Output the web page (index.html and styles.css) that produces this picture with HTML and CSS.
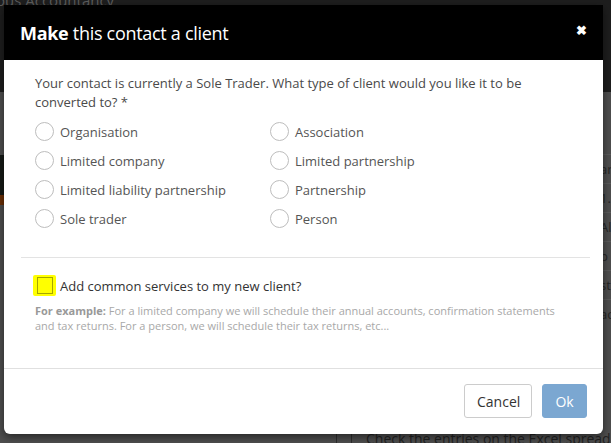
FILE: index.html
```html
<!DOCTYPE html>
<html>
<head>
<meta charset="utf-8">
<link rel="stylesheet" href="styles.css">
</head>
<body>
<div class="app">
  <div class="app-top"><span class="app-brand">ous Accountancy</span></div>
  <div class="app-side-dark"></div>
  <div class="app-side-orange"></div>
  <div class="app-right">
    <div class="rline">ar</div>
    <div class="rline">1.</div>
    <div class="rline">Al</div>
    <div class="rline">p</div>
    <div class="rline">st</div>
    <div class="rline">ac</div>
  </div>
  <div class="app-bottom"><span class="app-check"></span><span class="app-bottom-text">Check the entries on the Excel spreadsheet</span></div>
</div>

<div class="modal">
  <div class="modal-header">
    <h1 class="modal-title"><b>Make</b> this contact a client</h1>
    <span class="modal-close">&#x2716;</span>
  </div>
  <div class="modal-body">
    <p class="question">Your contact is currently a Sole Trader. What type of client would you like it to be converted to? *</p>
    <div class="radio-grid">
      <label class="radio"><span class="circle"></span>Organisation</label>
      <label class="radio"><span class="circle"></span>Association</label>
      <label class="radio"><span class="circle"></span>Limited company</label>
      <label class="radio"><span class="circle"></span>Limited partnership</label>
      <label class="radio"><span class="circle"></span>Limited liability partnership</label>
      <label class="radio"><span class="circle"></span>Partnership</label>
      <label class="radio"><span class="circle"></span>Sole trader</label>
      <label class="radio"><span class="circle"></span>Person</label>
    </div>
    <hr class="divider">
    <label class="check"><span class="check-hl"><span class="box"></span></span>Add common services to my new client?</label>
    <p class="help"><b>For example:</b> For a limited company we will schedule their annual accounts, confirmation statements and tax returns. For a person, we will schedule their tax returns, etc...</p>
  </div>
  <div class="modal-footer">
    <button class="btn btn-default">Cancel</button>
    <button class="btn btn-primary">Ok</button>
  </div>
</div>
</body>
</html>
```

FILE: styles.css
```css
* { box-sizing: border-box; }
html, body { margin: 0; padding: 0; }
body {
  width: 611px;
  height: 443px;
  overflow: hidden;
  background: #4e4e4e;
  font-family: "Open Sans", "Noto Sans", sans-serif;
  position: relative;
}
.app { position: absolute; inset: 0; overflow: hidden; }
.app-top {
  height: 92px;
  background: #1e1e1e;
  font-size: 15px;
  line-height: 1;
}
.app-brand { position: relative; top: -7px; margin-left: -4px; color: #5c5c5c; }
.app-side-dark { position: absolute; left: 0; top: 155px; width: 4px; height: 40px; background: #161a17; }
.app-side-orange { position: absolute; left: 0; top: 195px; width: 4px; height: 10px; background: #6b2f06; }
.app-right {
  position: absolute; left: 603px; top: 92px; width: 8px;
  padding-top: 62px;
  color: #262626;
  font-size: 13px;
  overflow: hidden;
}
.rline { height: 29px; line-height: 29px; border-top: 1px solid #5a5a5a; margin-left: -3px; white-space: nowrap; }
.app-bottom {
  position: absolute; left: 0; top: 426px; height: 20px; width: 611px;
  padding-left: 336px;
  display: flex; align-items: center; gap: 14px;
  color: #222; font-size: 14px;
  overflow: hidden;
}
.app-check { width: 16px; height: 16px; border: 1px solid #2e2e2e; flex: none; margin-top: 6px; }
.app-bottom-text { margin-top: 4px; white-space: nowrap; }

.modal {
  position: absolute;
  left: 4px; top: 5px;
  width: 599px; height: 429px;
  background: #fff;
  border-radius: 0 0 6px 6px;
  display: flex; flex-direction: column;
  box-shadow: 0 3px 8px rgba(0,0,0,0.5);
  overflow: hidden;
}
.modal-header {
  background: #000;
  height: 55px;
  display: flex; align-items: center; justify-content: space-between;
  padding: 0 16px 0 16px;
  color: #fff;
}
.modal-title { margin: 0; font-size: 18px; font-weight: 400; letter-spacing: -0.3px; }
.modal-title b { font-weight: 700; }
.modal-close { font-size: 13px; font-weight: 700; margin-top: -6px; }

.modal-body { padding: 14px 17px 0 31px; flex: 1; }
.question { margin: 0; font-size: 13px; line-height: 19px; color: #4a4a4a; width: 500px; }
.radio-grid {
  display: grid;
  grid-template-columns: 235px 1fr;
  grid-auto-rows: 29px;
  margin-top: 5px;
}
.radio { display: flex; align-items: center; font-size: 13px; color: #555; }
.circle {
  width: 19px; height: 19px; border-radius: 50%;
  border: 1px solid #bdbdbd;
  margin-right: 6px; flex: none;
}
.divider { border: 0; border-top: 1px solid #e3e3e3; margin: 24px 0 0 -14px; width: 569px; }
.check { display: flex; align-items: center; font-size: 13px; color: #333; margin: 17px 0 0 -2px; }
.check-hl {
  width: 23px; height: 21px; background: #ffff00; margin-right: 4px; flex: none;
  display: flex; align-items: center; justify-content: center;
  border-radius: 2px;
}
.box { width: 16px; height: 17px; border: 1px solid #a6a600; }
.help { margin: 7px 0 0; font-size: 11px; line-height: 15px; color: #a8a8a8; width: 535px; }
.help b { color: #999; }

.modal-footer {
  border-top: 1px solid #e0e0e0;
  height: 66px;
  display: flex; justify-content: flex-end; align-items: flex-start;
  padding: 15px 16px 0 0;
  gap: 10px;
}
.btn {
  font-family: "Open Sans", "Noto Sans", sans-serif;
  font-size: 14px;
  height: 34px;
  border-radius: 3px;
  padding: 0 12px;
}
.btn-default { background: #fff; border: 1px solid #ccc; color: #333; width: 68px; }
.btn-primary { background: #7ba7d1; border: 1px solid #7ba7d1; color: #fff; width: 45px; }
```
